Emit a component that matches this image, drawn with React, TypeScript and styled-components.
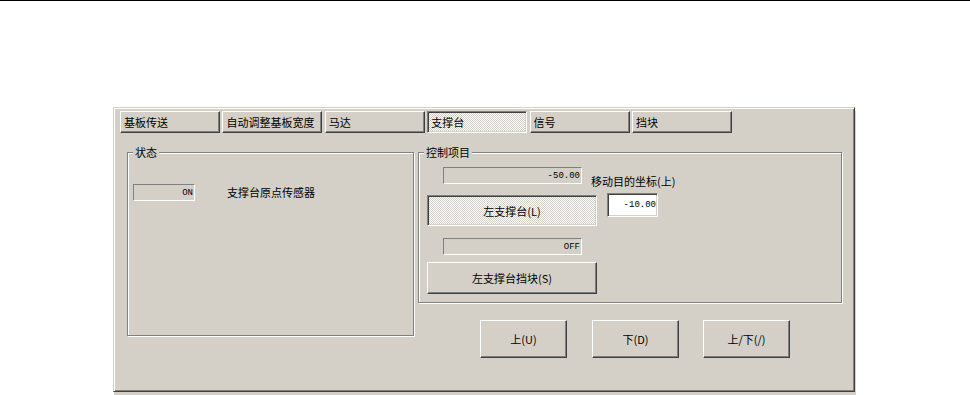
import React from "react";
import styled, { createGlobalStyle, css } from "styled-components";

const GlobalStyle = createGlobalStyle`
  html, body {
    margin: 0;
    padding: 0;
    background: #fff;
  }
  body {
    width: 970px;
    height: 395px;
    overflow: hidden;
    font-family: "Noto Sans CJK SC", "Liberation Sans", sans-serif;
    font-size: 11px;
    color: #000;
  }
`;

const raised = css`
  border: 1px solid;
  border-color: #fff #404040 #404040 #fff;
  box-shadow: inset -1px -1px 0 #808080;
  background: #d4d0c8;
`;

const pressed = css`
  border: 1px solid;
  border-color: #808080 #fff #fff #808080;
  box-shadow: inset 1px 1px 0 #404040, inset -1px -1px 0 #d4d0c8;
  background: repeating-conic-gradient(#fff 0% 25%, #d4d0c8 0% 50%) 0 0 / 2px 2px;
`;

const TopRule = styled.div`
  height: 1px;
  background: #000;
`;

const Window = styled.div`
  box-sizing: border-box;
  margin: 106px 0 0 113px;
  width: 742px;
  height: 285px;
  background: #d4d0c8;
  border: 1px solid;
  border-color: #d4d0c8 #404040 #404040 #d4d0c8;
  box-shadow: inset 1px 1px 0 #fff, inset -1px -1px 0 #808080, 1px 4px 0 #d4d0c8;
  padding: 3px 0 0 6px;
`;

const TabBar = styled.div`
  display: flex;
  gap: 2.4px;
`;

const Tab = styled.div<{ $active?: boolean }>`
  box-sizing: border-box;
  width: 100px;
  height: 22px;
  display: flex;
  align-items: center;
  padding-left: 3px;
  line-height: 14px;
  ${(p) => (p.$active ? pressed : raised)}
`;

const Body = styled.div`
  display: grid;
  grid-template-columns: 287px 424px;
  grid-template-rows: auto auto;
  column-gap: 4px;
  margin: 19px 0 0 7px;
`;

const GroupBox = styled.div<{ $h?: number; $span?: boolean }>`
  box-sizing: border-box;
  border: 1px solid #808080;
  box-shadow: inset 1px 1px 0 #fff, 1px 1px 0 #fff;
  ${(p) => p.$h && `height: ${p.$h}px;`}
  ${(p) => p.$span && `grid-row: 1 / span 2;`}
  padding-bottom: 8px;
`;

const Caption = styled.div`
  width: fit-content;
  height: 14px;
  line-height: 14px;
  margin: -8px 0 0 5px;
  padding: 0 2px;
  background: #d4d0c8;
`;

const Row = styled.div<{ $mt: number; $pl: number }>`
  display: flex;
  align-items: flex-start;
  margin-top: ${(p) => p.$mt}px;
  padding-left: ${(p) => p.$pl}px;
`;

const Readout = styled.div<{ $w: number }>`
  box-sizing: border-box;
  width: ${(p) => p.$w}px;
  height: 17px;
  border: 1px solid;
  border-color: #808080 #fff #fff #808080;
  display: flex;
  align-items: center;
  justify-content: flex-end;
  padding-right: 1px;
  font-family: "Liberation Mono", monospace;
  font-size: 9px;
  line-height: 10px;
`;

const Label = styled.span<{ $ml: number; $mt?: number }>`
  margin-left: ${(p) => p.$ml}px;
  margin-top: ${(p) => p.$mt ?? 0}px;
  line-height: 14px;
  white-space: nowrap;
`;

const Button = styled.div<{ $w: number; $h: number; $on?: boolean; $mt?: number; $ml?: number }>`
  box-sizing: border-box;
  width: ${(p) => p.$w}px;
  height: ${(p) => p.$h}px;
  margin-top: ${(p) => p.$mt ?? 0}px;
  margin-left: ${(p) => p.$ml ?? 0}px;
  display: flex;
  align-items: center;
  justify-content: center;
  line-height: 14px;
  white-space: nowrap;
  ${(p) => (p.$on ? pressed : raised)}
`;

const NumberInput = styled.input`
  box-sizing: border-box;
  width: 51px;
  height: 24px;
  margin: 0 0 0 10px;
  padding: 0 1px 0 0;
  border: 1px solid;
  border-color: #808080 #fff #fff #808080;
  box-shadow: inset 1px 1px 0 #404040, inset -1px -1px 0 #d4d0c8;
  background: #fff;
  text-align: right;
  font-family: "Liberation Mono", monospace;
  font-size: 9px;
  color: #000;
  outline: none;
`;

const ButtonRow = styled.div`
  display: flex;
  margin-top: 17px;
  padding-left: 62px;
`;

const tabs = ["基板传送", "自动调整基板宽度", "马达", "支撑台", "信号", "挡块"];

const App = () => {
  return (
    <>
      <GlobalStyle />
      <TopRule />
      <Window>
        <TabBar>
          {tabs.map((t) => (
            <Tab key={t} $active={t === "支撑台"}>
              {t}
            </Tab>
          ))}
        </TabBar>
        <Body>
          <GroupBox $span $h={184}>
            <Caption>状态</Caption>
            <Row $mt={25} $pl={5}>
              <Readout $w={62}>ON</Readout>
              <Label $ml={32} $mt={1}>支撑台原点传感器</Label>
            </Row>
          </GroupBox>

          <GroupBox>
            <Caption>控制项目</Caption>
            <Row $mt={8} $pl={24}>
              <Readout $w={139}>-50.00</Readout>
              <Label $ml={9} $mt={7}>移动目的坐标(上)</Label>
            </Row>
            <Row $mt={5} $pl={8}>
              <Button $w={170} $h={31} $mt={2} $on>
                左支撑台(L)
              </Button>
              <NumberInput defaultValue="-10.00" />
            </Row>
            <Row $mt={12} $pl={24}>
              <Readout $w={139}>OFF</Readout>
            </Row>
            <Row $mt={7} $pl={8}>
              <Button $w={170} $h={32}>
                左支撑台挡块(S)
              </Button>
            </Row>
          </GroupBox>

          <ButtonRow>
            <Button $w={87} $h={38}>
              上(U)
            </Button>
            <Button $w={87} $h={38} $ml={25}>
              下(D)
            </Button>
            <Button $w={87} $h={38} $ml={24}>
              上/下(/)
            </Button>
          </ButtonRow>
        </Body>
      </Window>
    </>
  );
};

export default App;
